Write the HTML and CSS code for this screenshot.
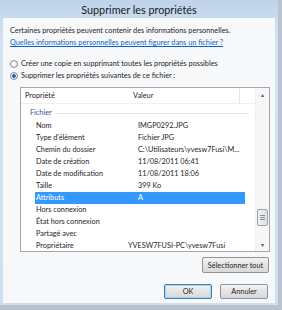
FILE: index.html
```html
<!DOCTYPE html>
<html lang="fr">
<head>
  <meta charset="UTF-8">
  <title>Supprimer les propriétés</title>
  <link rel="stylesheet" href="styles.css">
</head>
<body>
  <div class="window">
    <div class="titlebar">Supprimer les propriétés</div>
    <div class="client">
      <p class="intro">Certaines propriétés peuvent contenir des informations personnelles.</p>
      <a class="link" href="#">Quelles informations personnelles peuvent figurer dans un fichier ?</a>

      <div class="options">
        <label class="radio"><span class="dot"></span>Créer une copie en supprimant toutes les propriétés possibles</label>
        <label class="radio checked"><span class="dot"></span>Supprimer les propriétés suivantes de ce fichier :</label>
      </div>

      <div class="listview">
        <div class="list">
          <div class="header">
            <span class="col-prop">Propriété</span>
            <span class="col-val">Valeur</span>
          </div>
          <div class="group"><span>Fichier</span></div>
          <div class="row"><span class="label">Nom</span><span class="value">IMGP0292.JPG</span></div>
          <div class="row"><span class="label">Type d'élément</span><span class="value">Fichier JPG</span></div>
          <div class="row"><span class="label">Chemin du dossier</span><span class="value">C:\Utilisateurs\yvesw7Fusi\M...</span></div>
          <div class="row"><span class="label">Date de création</span><span class="value">11/08/2011 06:41</span></div>
          <div class="row"><span class="label">Date de modification</span><span class="value">11/08/2011 18:06</span></div>
          <div class="row"><span class="label">Taille</span><span class="value">399 Ko</span></div>
          <div class="row selected"><span class="label">Attributs</span><span class="value">A</span></div>
          <div class="row"><span class="label">Hors connexion</span><span class="value"></span></div>
          <div class="row"><span class="label">État hors connexion</span><span class="value"></span></div>
          <div class="row"><span class="label">Partagé avec</span><span class="value"></span></div>
          <div class="row"><span class="label">Propriétaire</span><span class="value shifted">YVESW7FUSI-PC\yvesw7Fusi</span></div>
        </div>
        <div class="scrollbar">
          <span class="arrow">&#9652;</span>
          <div class="track">
            <div class="thumb"><span></span><span></span><span></span></div>
          </div>
          <span class="arrow">&#9662;</span>
        </div>
      </div>

      <div class="select-all">
        <button class="btn wide">Sélectionner tout</button>
      </div>

      <div class="actions">
        <button class="btn default">OK</button>
        <button class="btn">Annuler</button>
      </div>
    </div>
  </div>
</body>
</html>
```

FILE: styles.css
```css
body {
  margin: 0;
  background: #b9c3cf;
  font-family: Lato, "Open Sans", sans-serif;
  font-size: 7.3px;
  color: #1e1e1e;
}
.window {
  width: 278px;
  height: 305px;
  background: linear-gradient(#bfd3e9, #d4e3f2 40px, #cfdff0);
  padding: 0 3px 2px 3px;
  box-sizing: border-box;
}
.titlebar {
  height: 18px;
  line-height: 19px;
  text-align: center;
  font-size: 10.8px;
  color: #1a1a1a;
}
.client {
  background: #f7f8fa;
  height: 285px;
  padding: 7px 6px 0 7px;
  box-sizing: border-box;
  line-height: 12px;
}
.intro {
  margin: 0;
}
.link {
  display: block;
  color: #0a64c8;
}
.options {
  margin-top: 9px;
}
.radio {
  display: flex;
  align-items: center;
  gap: 3px;
}
.dot {
  width: 6px;
  height: 6px;
  border: 1px solid #8a8f96;
  border-radius: 50%;
  background: radial-gradient(#ffffff, #e2e4e8);
}
.radio.checked .dot {
  background: radial-gradient(#1c4f8e 0, #3a7fc8 1.6px, #dfe6ee 2.2px);
}
.listview {
  display: flex;
  margin: 5px 0 0 10px;
  width: 250px;
  height: 165px;
  border: 1px solid #a0a7b0;
  box-sizing: border-box;
  background: #ffffff;
  overflow: hidden;
}
.list {
  flex: 1;
}
.header {
  display: flex;
  height: 15px;
  line-height: 15px;
  border-bottom: 1px solid #eef0f3;
}
.col-prop {
  width: 108px;
  padding-left: 4px;
}
.col-val {
  width: 106px;
  border-right: 1px solid #e3e6ea;
}
.group {
  display: flex;
  align-items: center;
  gap: 4px;
  margin: 3px 6px 1px 9px;
  color: #2f4f9a;
}
.group::after {
  content: "";
  flex: 1;
  border-top: 1px solid #e3e8ef;
}
.row {
  display: flex;
  margin-left: 14px;
  width: 210px;
}
.label {
  width: 102px;
  padding-left: 1px;
}
.value {
  white-space: nowrap;
}
.value.shifted {
  margin-left: -10px;
}
.row.selected {
  background: #3399ff;
  color: #ffffff;
}
.scrollbar {
  width: 13px;
  display: flex;
  flex-direction: column;
  align-items: center;
  background: #f7f7f7;
  border-left: 1px solid #eceef0;
}
.arrow {
  font-size: 6px;
  line-height: 13px;
  color: #555a60;
}
.track {
  flex: 1;
  position: relative;
  width: 100%;
}
.thumb {
  position: absolute;
  top: 108px;
  left: 1px;
  width: 9px;
  height: 15px;
  border: 1px solid #9aa1a9;
  border-radius: 2px;
  background: linear-gradient(90deg, #f2f3f5, #dcdfe3);
  display: flex;
  flex-direction: column;
  justify-content: center;
  align-items: center;
  gap: 1px;
}
.thumb span {
  width: 5px;
  height: 1px;
  background: #8a9097;
}
.btn {
  font-family: inherit;
  font-size: 7.3px;
  color: #1e1e1e;
  border: 1px solid #8e949b;
  border-radius: 2px;
  background: linear-gradient(#f3f3f3, #e4e4e4 50%, #d9d9d9);
  padding: 0;
}
.select-all {
  display: flex;
  justify-content: flex-end;
  margin-top: 5px;
}
.wide {
  width: 67px;
  height: 16px;
}
.actions {
  display: flex;
  justify-content: flex-end;
  gap: 8px;
  margin-top: 11px;
  padding-right: 1px;
}
.actions .btn {
  width: 48px;
  height: 15px;
}
.btn.default {
  border-color: #3c7fb1;
  box-shadow: inset 0 0 0 1px #a8d4f0;
}
```
